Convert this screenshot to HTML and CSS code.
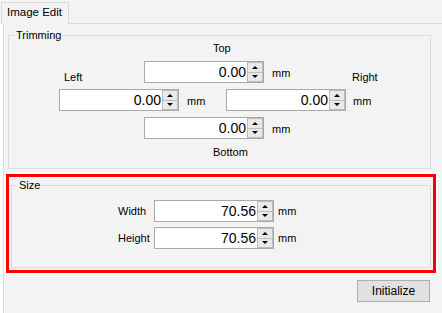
FILE: index.html
```html
<!DOCTYPE html>
<html lang="en">
<head>
  <meta charset="UTF-8" />
  <meta name="viewport" content="width=device-width, initial-scale=1.0" />
  <title>Image Edit</title>
  <link rel="stylesheet" href="styles.css">
</head>
<body>
  <div class="tabs">
    <div class="tab">Image Edit</div>
  </div>

  <div class="page">
    <fieldset class="group trim">
      <legend>Trimming</legend>
      <div class="cap">Top</div>
      <div class="row row-top">
        <span class="side side-left">Left</span>
        <div class="spin">
          <span class="val">0.00</span>
          <span class="arrows"><span class="btn"><i class="up"></i></span><span class="btn"><i class="down"></i></span></span>
        </div>
        <span class="unit unit-top">mm</span>
        <span class="side">Right</span>
      </div>
      <div class="row row-mid">
        <div class="spin spin-left">
          <span class="val">0.00</span>
          <span class="arrows"><span class="btn"><i class="up"></i></span><span class="btn"><i class="down"></i></span></span>
        </div>
        <span class="unit unit-left">mm</span>
        <div class="spin">
          <span class="val">0.00</span>
          <span class="arrows"><span class="btn"><i class="up"></i></span><span class="btn"><i class="down"></i></span></span>
        </div>
        <span class="unit unit-right">mm</span>
      </div>
      <div class="row row-bottom">
        <div class="spin spin-bottom">
          <span class="val">0.00</span>
          <span class="arrows"><span class="btn"><i class="up"></i></span><span class="btn"><i class="down"></i></span></span>
        </div>
        <span class="unit unit-top">mm</span>
      </div>
      <div class="cap cap-bottom">Bottom</div>
    </fieldset>

    <div class="mark">
      <fieldset class="group size">
        <legend>Size</legend>
        <div class="row size-row">
          <span class="name">Width</span>
          <div class="spin">
            <span class="val">70.56</span>
            <span class="arrows"><span class="btn"><i class="up"></i></span><span class="btn"><i class="down"></i></span></span>
          </div>
          <span class="unit unit-size">mm</span>
        </div>
        <div class="row size-row">
          <span class="name">Height</span>
          <div class="spin">
            <span class="val">70.56</span>
            <span class="arrows"><span class="btn"><i class="up"></i></span><span class="btn"><i class="down"></i></span></span>
          </div>
          <span class="unit unit-size">mm</span>
        </div>
      </fieldset>
    </div>

    <div class="actions">
      <button class="init">Initialize</button>
    </div>
  </div>
</body>
</html>
```

FILE: styles.css
```css
html, body {
  height:100%;
}
body {
  margin:0;
  display:flex;
  flex-direction:column;
  background:#fff;
  font-family:"Liberation Sans", Arial, sans-serif;
  font-size:11px;
  line-height:13px;
  color:#000;
  overflow:hidden;
}

/* tab strip */
.tabs {
  display:flex;
  height:23px;
  background:#f3f3f3;
}
.tab {
  position:relative;
  z-index:1;
  box-sizing:border-box;
  width:68px;
  height:22px;
  margin:2px 0 -1px 1px;
  padding:2px 0 0 5px;
  border:1px solid #d9d9d9;
  border-bottom:0;
  background:#f3f3f3;
  font-size:11.5px;
  line-height:14px;
}

.page {
  flex:1;
  margin-left:3px;
  border-top:1px solid #d9d9d9;
  border-left:1px solid #dcdcdc;
  background:#f3f3f3;
}

/* group boxes */
.group {
  min-width:0;
  margin:0;
  padding:0;
  border:1px solid #dcdcdc;
}
.group legend {
  margin-left:6px;
  padding:0 1px;
  font-size:11px;
  line-height:13px;
}
.trim {
  margin:5px 11px 0 4px;
  padding-bottom:9px;
}
.size {
  padding-bottom:18px;
}

.row {
  display:flex;
  align-items:center;
}
.cap {
  padding-left:204px;
  height:13px;
}
.cap-bottom {
  margin-top:7px;
}
.row-top {
  margin-top:6px;
  align-items:flex-end;
}
.row-mid, .row-bottom {
  margin-top:6px;
}
.side {
  margin-bottom:-1px;
}
.side-left {
  margin-left:55px;
  width:80px;
}
.spin-left {
  margin-left:50px;
}
.spin-bottom {
  margin-left:135px;
}

.unit {
  align-self:center;
  padding-top:2px;
}
.unit-top {
  margin-left:8px;
  width:80px;
}
.unit-left {
  margin-left:8px;
  width:39px;
}
.unit-right {
  margin-left:7px;
}
.unit-size {
  margin-left:4px;
  padding-top:0;
}

/* numeric up/down */
.spin {
  display:flex;
  box-sizing:border-box;
  width:120px;
  height:22px;
  border:1px solid #a9a9a9;
  background:#fff;
}
.val {
  flex:1;
  padding-right:1px;
  text-align:right;
  font-size:14px;
  line-height:20px;
}
.arrows {
  display:flex;
  flex-direction:column;
  box-sizing:border-box;
  width:16px;
  border:1px solid #bcbcbc;
  background:#e9e9e9;
}
.btn {
  flex:1;
  display:flex;
  align-items:center;
  justify-content:center;
}
.btn + .btn {
  border-top:1px solid #bcbcbc;
}
.up, .down {
  width:0;
  height:0;
  border-left:3px solid transparent;
  border-right:3px solid transparent;
}
.up {
  border-bottom:3px solid #000;
}
.down {
  border-top:3px solid #000;
}

/* highlighted size block */
.mark {
  margin:5px 6px 0 2px;
  padding:2px;
  border:3px solid #ff0000;
  outline:2px solid #fff;
}
.size-row:first-of-type {
  margin-top:8px;
}
.size-row + .size-row {
  margin-top:5px;
}
.name {
  margin-left:106px;
  width:36px;
}

.actions {
  display:flex;
  justify-content:flex-end;
  margin-top:7px;
  padding-right:12px;
}
.init {
  box-sizing:border-box;
  width:73px;
  height:22px;
  padding:0;
  border:1px solid #adadad;
  background:#e1e1e1;
  font-family:"Liberation Sans", Arial, sans-serif;
  font-size:12px;
  color:#000;
}
```
